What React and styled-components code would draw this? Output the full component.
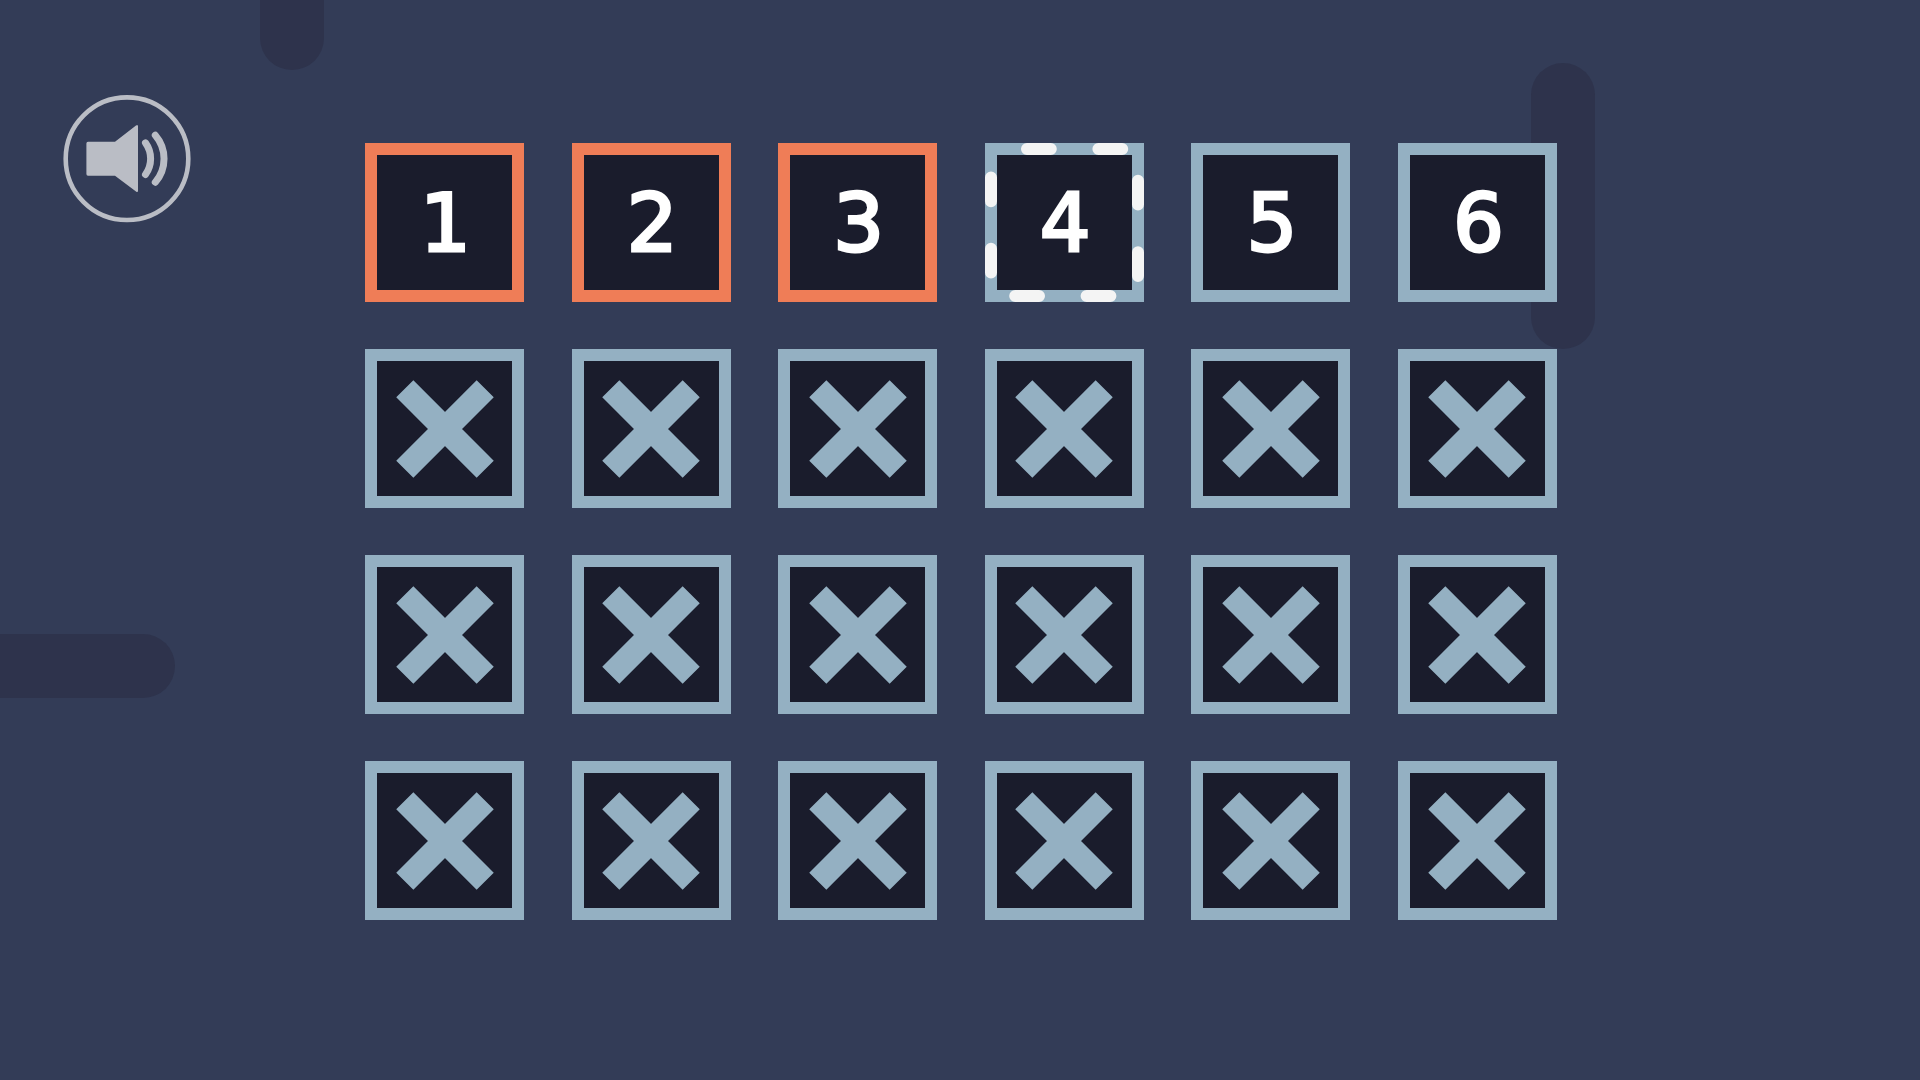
import React from "react";
import styled, { createGlobalStyle, css } from "styled-components";

const colors = {
  background: "#333c57",
  shade: "#2e334c",
  tile: "#1a1c2c",
  locked: "#94b0c2",
  done: "#ef7d57",
  dash: "#f4f4f4",
  text: "#ffffff",
};

const GlobalStyle = createGlobalStyle`
  *, *::before, *::after { box-sizing: border-box; }
  body {
    margin: 0;
    background: ${colors.background};
    font-family: "DejaVu Sans", Verdana, sans-serif;
  }
`;

const Page = styled.main`
  position: relative;
  display: grid;
  grid-template-columns: 365px minmax(0, 1fr) 363px;
  min-height: 100vh;
  overflow: hidden;
  background: ${colors.background};
`;

/* Rounded bars drifting behind the board */
const Pill = styled.span`
  position: absolute;
  border-radius: 32px;
  background: ${colors.shade};
  ${({ $place }) =>
    ({
      top: css`
        left: 260px;
        top: -216px;
        width: 64px;
        height: 286px;
      `,
      right: css`
        right: 325px;
        top: 63px;
        width: 64px;
        height: 286px;
      `,
      left: css`
        left: -111px;
        top: 634px;
        width: 286px;
        height: 64px;
      `,
    })[$place]}
`;

const Side = styled.aside`
  position: relative;
  padding: 95px 0 0 63px;
`;

const SoundButton = styled.button`
  display: block;
  width: 128px;
  height: 128px;
  padding: 0;
  border: 0;
  border-radius: 50%;
  background: none;
  color: ${colors.dash};
  opacity: 0.7;
  cursor: pointer;

  svg {
    display: block;
  }
`;

const Board = styled.section`
  position: relative;
  display: grid;
  grid-template-columns: repeat(6, minmax(0, 159px));
  justify-content: space-between;
  align-content: start;
  row-gap: 47px;
  padding: 143px 0;
`;

const Tile = styled.button`
  position: relative;
  display: flex;
  align-items: center;
  justify-content: center;
  height: 159px;
  padding: 0;
  border: 12px solid ${({ $done }) => ($done ? colors.done : colors.locked)};
  border-radius: 0;
  background: ${colors.tile};
  color: ${colors.text};
  font-family: inherit;
  font-size: 80px;
  line-height: 96px;
  -webkit-text-stroke: 3px ${colors.text};
  cursor: ${({ disabled }) => (disabled ? "default" : "pointer")};
`;

const LevelNumber = styled.span`
  padding: 2px 0 0 2px;
`;

/* Dashed marker lying over the border of the selected tile */
const Marker = styled.svg`
  position: absolute;
  inset: -12px;
  width: 159px;
  height: 159px;
`;

const Cross = styled.svg`
  display: block;
  width: 98px;
  height: 98px;
`;

function SoundIcon() {
  return (
    <svg width="128" height="128" viewBox="0 0 128 128" fill="none" stroke="currentColor" aria-hidden="true">
      <circle cx="64" cy="63.7" r="61.3" strokeWidth="4.6" />
      <path
        d="M25 46.7H52L73 30.6Q75 29 75 31.5V95.5Q75 98 73 96.6L52 80.7H25Q23.4 80.7 23.4 79V48.4Q23.4 46.7 25 46.7Z"
        fill="currentColor"
        stroke="none"
      />
      <path d="M82.5 47.9A27 27 0 0 1 82.5 79.5" strokeWidth="7" strokeLinecap="round" />
      <path d="M92.3 40.2A36 36 0 0 1 92.3 87.2" strokeWidth="7" strokeLinecap="round" />
    </svg>
  );
}

function SelectedMarker() {
  return (
    <Marker viewBox="0 0 159 159" fill="none" aria-hidden="true">
      <path
        d="M6 6H153V153H6Z"
        stroke={colors.dash}
        strokeWidth="12"
        strokeLinecap="round"
        strokeDasharray="23.8 47.6"
        strokeDashoffset="-36"
      />
    </Marker>
  );
}

function LockedCross() {
  return (
    <Cross viewBox="-49 -49 98 98" aria-hidden="true">
      <path d="M-40.2 -40.2L40.2 40.2M40.2 -40.2L-40.2 40.2" stroke={colors.locked} strokeWidth="24.2" />
    </Cross>
  );
}

const levels = Array.from({ length: 24 }, (_, i) => ({
  number: i + 1,
  done: i < 3,
  selected: i === 3,
  locked: i > 5,
}));

export default function App() {
  return (
    <>
      <GlobalStyle />
      <Page>
        <Pill $place="top" />
        <Pill $place="right" />
        <Pill $place="left" />
        <Side>
          <SoundButton type="button" aria-label="Sound">
            <SoundIcon />
          </SoundButton>
        </Side>
        <Board aria-label="Levels">
          {levels.map(({ number, done, selected, locked }) => (
            <Tile
              key={number}
              type="button"
              $done={done}
              disabled={locked}
              aria-label={locked ? `Level ${number}, locked` : undefined}
            >
              {locked ? <LockedCross /> : <LevelNumber>{number}</LevelNumber>}
              {selected && <SelectedMarker />}
            </Tile>
          ))}
        </Board>
      </Page>
    </>
  );
}
